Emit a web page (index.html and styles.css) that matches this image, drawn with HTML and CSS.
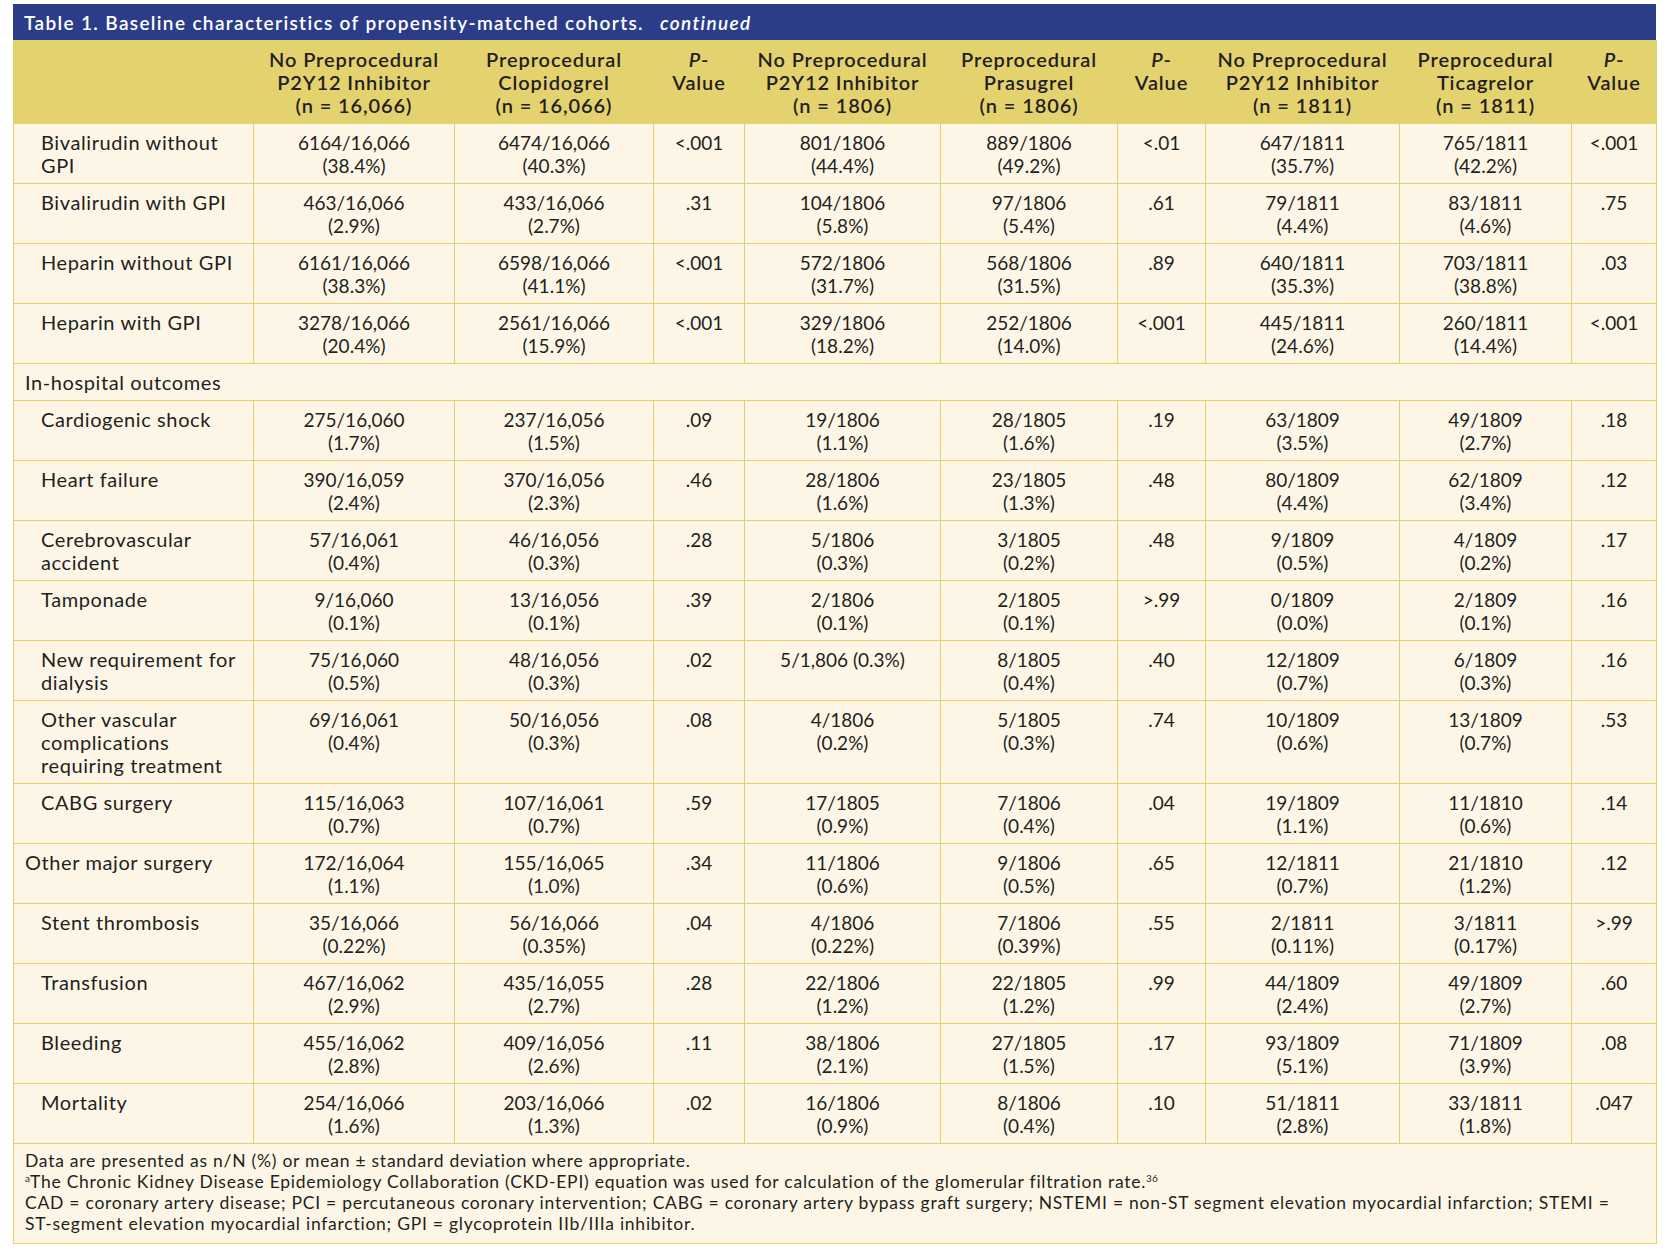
FILE: index.html
```html
<!DOCTYPE html>
<html lang="en">
<head>
<meta charset="utf-8">
<title>Table 1</title>
<link rel="stylesheet" href="styles.css">
</head>
<body>
<div class="page">
  <div class="title-bar"><span class="title">Table 1. Baseline characteristics of propensity-matched cohorts.</span><span class="cont">continued</span></div>
  <table class="data">
    <colgroup>
      <col class="c-label"><col class="c2"><col class="c3"><col class="c4"><col class="c5"><col class="c6"><col class="c7"><col class="c8"><col class="c9"><col class="c10">
    </colgroup>
    <thead>
      <tr>
        <th></th>
        <th>No Preprocedural<br>P2Y12 Inhibitor<br>(n = 16,066)</th>
        <th>Preprocedural<br>Clopidogrel<br>(n = 16,066)</th>
        <th><i>P</i>-<br>Value</th>
        <th>No Preprocedural<br>P2Y12 Inhibitor<br>(n = 1806)</th>
        <th>Preprocedural<br>Prasugrel<br>(n = 1806)</th>
        <th><i>P</i>-<br>Value</th>
        <th>No Preprocedural<br>P2Y12 Inhibitor<br>(n = 1811)</th>
        <th>Preprocedural<br>Ticagrelor<br>(n = 1811)</th>
        <th><i>P</i>-<br>Value</th>
      </tr>
    </thead>
    <tbody>
      <tr><td class="sub">Bivalirudin without<br>GPI</td><td>6164/16,066<br>(38.4%)</td><td>6474/16,066<br>(40.3%)</td><td>&lt;.001</td><td>801/1806<br>(44.4%)</td><td>889/1806<br>(49.2%)</td><td>&lt;.01</td><td>647/1811<br>(35.7%)</td><td>765/1811<br>(42.2%)</td><td>&lt;.001</td></tr>
      <tr><td class="sub">Bivalirudin with GPI</td><td>463/16,066<br>(2.9%)</td><td>433/16,066<br>(2.7%)</td><td>.31</td><td>104/1806<br>(5.8%)</td><td>97/1806<br>(5.4%)</td><td>.61</td><td>79/1811<br>(4.4%)</td><td>83/1811<br>(4.6%)</td><td>.75</td></tr>
      <tr><td class="sub">Heparin without GPI</td><td>6161/16,066<br>(38.3%)</td><td>6598/16,066<br>(41.1%)</td><td>&lt;.001</td><td>572/1806<br>(31.7%)</td><td>568/1806<br>(31.5%)</td><td>.89</td><td>640/1811<br>(35.3%)</td><td>703/1811<br>(38.8%)</td><td>.03</td></tr>
      <tr><td class="sub">Heparin with GPI</td><td>3278/16,066<br>(20.4%)</td><td>2561/16,066<br>(15.9%)</td><td>&lt;.001</td><td>329/1806<br>(18.2%)</td><td>252/1806<br>(14.0%)</td><td>&lt;.001</td><td>445/1811<br>(24.6%)</td><td>260/1811<br>(14.4%)</td><td>&lt;.001</td></tr>
      <tr class="section"><td colspan="10" class="top">In-hospital outcomes</td></tr>
      <tr><td class="sub">Cardiogenic shock</td><td>275/16,060<br>(1.7%)</td><td>237/16,056<br>(1.5%)</td><td>.09</td><td>19/1806<br>(1.1%)</td><td>28/1805<br>(1.6%)</td><td>.19</td><td>63/1809<br>(3.5%)</td><td>49/1809<br>(2.7%)</td><td>.18</td></tr>
      <tr><td class="sub">Heart failure</td><td>390/16,059<br>(2.4%)</td><td>370/16,056<br>(2.3%)</td><td>.46</td><td>28/1806<br>(1.6%)</td><td>23/1805<br>(1.3%)</td><td>.48</td><td>80/1809<br>(4.4%)</td><td>62/1809<br>(3.4%)</td><td>.12</td></tr>
      <tr><td class="sub">Cerebrovascular<br>accident</td><td>57/16,061<br>(0.4%)</td><td>46/16,056<br>(0.3%)</td><td>.28</td><td>5/1806<br>(0.3%)</td><td>3/1805<br>(0.2%)</td><td>.48</td><td>9/1809<br>(0.5%)</td><td>4/1809<br>(0.2%)</td><td>.17</td></tr>
      <tr><td class="sub">Tamponade</td><td>9/16,060<br>(0.1%)</td><td>13/16,056<br>(0.1%)</td><td>.39</td><td>2/1806<br>(0.1%)</td><td>2/1805<br>(0.1%)</td><td>&gt;.99</td><td>0/1809<br>(0.0%)</td><td>2/1809<br>(0.1%)</td><td>.16</td></tr>
      <tr><td class="sub">New requirement for<br>dialysis</td><td>75/16,060<br>(0.5%)</td><td>48/16,056<br>(0.3%)</td><td>.02</td><td>5/1,806 (0.3%)</td><td>8/1805<br>(0.4%)</td><td>.40</td><td>12/1809<br>(0.7%)</td><td>6/1809<br>(0.3%)</td><td>.16</td></tr>
      <tr><td class="sub">Other vascular<br>complications<br>requiring treatment</td><td>69/16,061<br>(0.4%)</td><td>50/16,056<br>(0.3%)</td><td>.08</td><td>4/1806<br>(0.2%)</td><td>5/1805<br>(0.3%)</td><td>.74</td><td>10/1809<br>(0.6%)</td><td>13/1809<br>(0.7%)</td><td>.53</td></tr>
      <tr><td class="sub">CABG surgery</td><td>115/16,063<br>(0.7%)</td><td>107/16,061<br>(0.7%)</td><td>.59</td><td>17/1805<br>(0.9%)</td><td>7/1806<br>(0.4%)</td><td>.04</td><td>19/1809<br>(1.1%)</td><td>11/1810<br>(0.6%)</td><td>.14</td></tr>
      <tr><td class="top">Other major surgery</td><td>172/16,064<br>(1.1%)</td><td>155/16,065<br>(1.0%)</td><td>.34</td><td>11/1806<br>(0.6%)</td><td>9/1806<br>(0.5%)</td><td>.65</td><td>12/1811<br>(0.7%)</td><td>21/1810<br>(1.2%)</td><td>.12</td></tr>
      <tr><td class="sub">Stent thrombosis</td><td>35/16,066<br>(0.22%)</td><td>56/16,066<br>(0.35%)</td><td>.04</td><td>4/1806<br>(0.22%)</td><td>7/1806<br>(0.39%)</td><td>.55</td><td>2/1811<br>(0.11%)</td><td>3/1811<br>(0.17%)</td><td>&gt;.99</td></tr>
      <tr><td class="sub">Transfusion</td><td>467/16,062<br>(2.9%)</td><td>435/16,055<br>(2.7%)</td><td>.28</td><td>22/1806<br>(1.2%)</td><td>22/1805<br>(1.2%)</td><td>.99</td><td>44/1809<br>(2.4%)</td><td>49/1809<br>(2.7%)</td><td>.60</td></tr>
      <tr><td class="sub">Bleeding</td><td>455/16,062<br>(2.8%)</td><td>409/16,056<br>(2.6%)</td><td>.11</td><td>38/1806<br>(2.1%)</td><td>27/1805<br>(1.5%)</td><td>.17</td><td>93/1809<br>(5.1%)</td><td>71/1809<br>(3.9%)</td><td>.08</td></tr>
      <tr><td class="sub">Mortality</td><td>254/16,066<br>(1.6%)</td><td>203/16,066<br>(1.3%)</td><td>.02</td><td>16/1806<br>(0.9%)</td><td>8/1806<br>(0.4%)</td><td>.10</td><td>51/1811<br>(2.8%)</td><td>33/1811<br>(1.8%)</td><td>.047</td></tr>
    </tbody>
    <tfoot>
      <tr><td colspan="10" class="notes">Data are presented as n/N (%) or mean ± standard deviation where appropriate.<br><sup>a</sup>The Chronic Kidney Disease Epidemiology Collaboration (CKD-EPI) equation was used for calculation of the glomerular filtration rate.<sup>36</sup><br>CAD = coronary artery disease; PCI = percutaneous coronary intervention; CABG = coronary artery bypass graft surgery; NSTEMI = non-ST segment elevation myocardial infarction; STEMI =<br>ST-segment elevation myocardial infarction; GPI = glycoprotein IIb/IIIa inhibitor.</td></tr>
    </tfoot>
  </table>
</div>
</body>
</html>
```

FILE: styles.css
```css
html, body {
  margin: 0;
  padding: 0;
  background: #ffffff;
}

.page {
  padding: 4px 10px 0 13px;
  font-family: Lato, "Open Sans", sans-serif;
  color: #231f20;
}

.title-bar {
  background: #2b3d89;
  color: #ffffff;
  height: 36px;
  display: flex;
  align-items: center;
  padding-left: 11px;
  font-size: 19px;
  font-weight: 600;
  letter-spacing: 1.35px;
  width: 1632px;
}

.title-bar .cont {
  font-style: italic;
  font-weight: 600;
  margin-left: 16px;
}

table.data {
  width: 1643px;
  border-collapse: collapse;
  table-layout: fixed;
  font-size: 19px;
  line-height: 23px;
}

col.c-label { width: 240px; }
col.c2 { width: 201px; }
col.c3 { width: 199px; }
col.c4 { width: 91px; }
col.c5 { width: 196px; }
col.c6 { width: 177px; }
col.c7 { width: 88px; }
col.c8 { width: 194px; }
col.c9 { width: 172px; }
col.c10 { width: 85px; }

table.data th {
  background: #e4d26f;
  font-size: 20px;
  font-weight: 600;
  letter-spacing: 0.9px;
  text-align: center;
  vertical-align: top;
  padding: 7px 2px 6px;
  border: 1px solid #e4d26f;
}

table.data td {
  background: #fdf6e7;
  border: 1px solid #e7cf66;
  text-align: center;
  vertical-align: top;
  padding: 7px 4px 6px;
}

table.data td.sub,
table.data td.top {
  text-align: left;
  font-size: 20px;
  letter-spacing: 0.6px;
}

table.data td.sub {
  padding-left: 27px;
}

table.data td.top {
  padding-left: 11px;
}

table.data td.notes {
  text-align: left;
  padding: 6px 8px 9px 11px;
  font-size: 17.5px;
  line-height: 21px;
  letter-spacing: 0.75px;
}

table.data td.notes sup {
  font-size: 10px;
  line-height: 0;
  letter-spacing: 0;
  vertical-align: 6px;
}
```
